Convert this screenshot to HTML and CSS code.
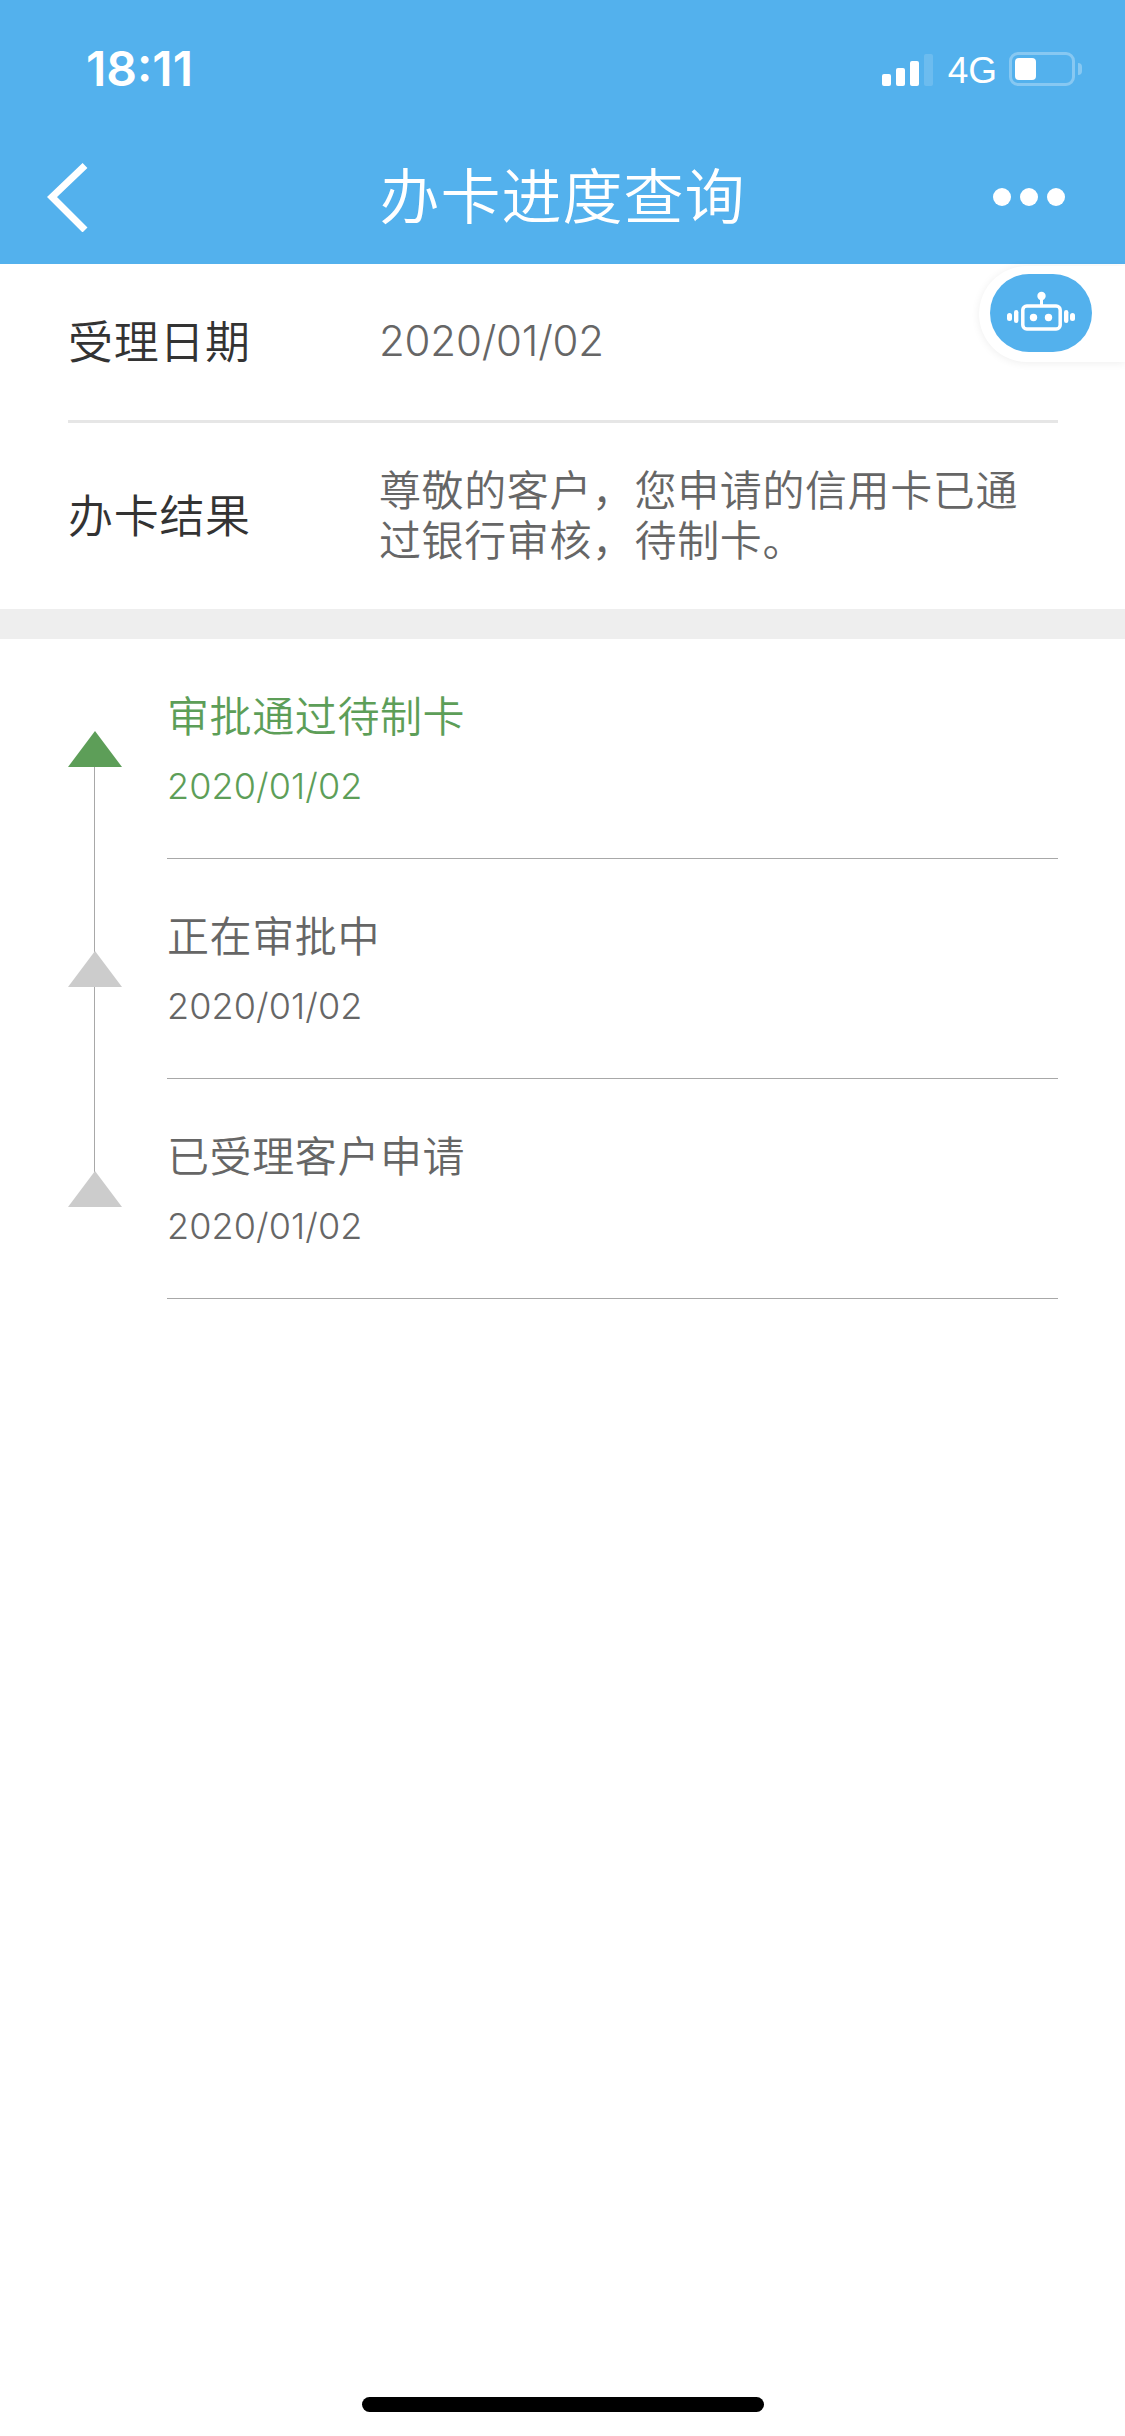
FILE: index.html
```html
<!DOCTYPE html>
<html lang="zh">
<head>
    <meta charset="UTF-8">
    <meta name="viewport" content="width=device-width, initial-scale=1.0">
    <title>办卡进度查询</title>
    <link rel="stylesheet" href="styles.css">
</head>
<body>
    <div class="page">
        <header class="header">
            <div class="status-bar">
                <span class="time">18:11</span>
                <div class="status-right">
                    <div class="signal">
                        <i class="bar bar-1"></i>
                        <i class="bar bar-2"></i>
                        <i class="bar bar-3"></i>
                        <i class="bar bar-4"></i>
                    </div>
                    <span class="network">4G</span>
                    <div class="battery"><i class="battery-level"></i></div>
                    <i class="battery-nub"></i>
                </div>
            </div>
            <div class="nav-bar">
                <svg class="back-icon" width="42" height="70" viewBox="0 0 42 70">
                    <path d="M38 3.500 L5 35 L38 68" fill="none" stroke="#fff" stroke-width="7"/>
                </svg>
                <h1 class="nav-title">办卡进度查询</h1>
                <div class="more">
                    <i class="dot"></i>
                    <i class="dot"></i>
                    <i class="dot"></i>
                </div>
            </div>
        </header>

        <div class="robot-tab">
            <div class="robot-btn">
                <svg width="70" height="44" viewBox="0 0 70 44" fill="none">
                    <circle cx="35.500" cy="5" r="4.200" fill="#fff"/>
                    <path d="M35.500 8 V15" stroke="#fff" stroke-width="3"/>
                    <rect x="16.800" y="15" width="37.400" height="23" rx="4" stroke="#fff" stroke-width="3.500"/>
                    <circle cx="27.500" cy="26.500" r="3.700" fill="#fff"/>
                    <circle cx="42.500" cy="26.500" r="3.700" fill="#fff"/>
                    <rect x="8" y="19" width="4.400" height="13" rx="2.200" fill="#fff"/>
                    <rect x="1" y="22" width="5" height="8" rx="2.500" fill="#fff"/>
                    <rect x="58" y="19" width="4.400" height="13" rx="2.200" fill="#fff"/>
                    <rect x="64" y="22" width="5" height="8" rx="2.500" fill="#fff"/>
                </svg>
            </div>
        </div>

        <section class="summary">
            <div class="summary-row row-date">
                <div class="summary-label">受理日期</div>
                <div class="summary-value date-value">2020/01/02</div>
            </div>
            <div class="summary-row row-result">
                <div class="summary-label">办卡结果</div>
                <div class="summary-value">尊敬的客户，您申请的信用卡已通过银行审核，待制卡。</div>
            </div>
        </section>

        <div class="divider"></div>

        <ul class="timeline">
            <li class="step step-active">
                <div class="step-mark"><i class="triangle"></i></div>
                <div class="step-body">
                    <div class="step-title">审批通过待制卡</div>
                    <div class="step-date">2020/01/02</div>
                </div>
            </li>
            <li class="step">
                <div class="step-mark"><i class="triangle"></i></div>
                <div class="step-body">
                    <div class="step-title">正在审批中</div>
                    <div class="step-date">2020/01/02</div>
                </div>
            </li>
            <li class="step">
                <div class="step-mark"><i class="triangle"></i></div>
                <div class="step-body">
                    <div class="step-title">已受理客户申请</div>
                    <div class="step-date">2020/01/02</div>
                </div>
            </li>
        </ul>

        <div class="home-area"><div class="home-indicator"></div></div>
    </div>
</body>
</html>
```

FILE: styles.css
```css
* {
    box-sizing: border-box;
}

body {
    margin: 0;
    background: #fff;
    font-family: "Inter", "Noto Sans CJK SC", sans-serif;
}

.page {
    position: relative;
    display: flex;
    flex-direction: column;
    width: 1125px;
    height: 2436px;
    overflow: hidden;
}

/* header */
.header {
    height: 264px;
    background: #53b1ed;
    color: #fff;
}

.status-bar {
    display: flex;
    justify-content: space-between;
    align-items: flex-end;
    height: 86px;
    padding: 0 43px 0 86px;
}

.time {
    font-size: 48px;
    font-weight: 600;
    line-height: 46px;
    margin-bottom: -6px;
}

.status-right {
    display: flex;
    align-items: flex-end;
}

.signal {
    display: flex;
    align-items: flex-end;
    gap: 5px;
    height: 33px;
    margin-right: 15px;
}

.bar {
    width: 9px;
    background: #fff;
    border-radius: 2px;
}

.bar-1 { height: 12px; }
.bar-2 { height: 18px; }
.bar-3 { height: 25px; }
.bar-4 { height: 32px; background: rgba(255, 255, 255, 0.15); }

.network {
    font-family: "Liberation Sans", sans-serif;
    font-size: 37px;
    line-height: 36px;
    margin-right: 12px;
    margin-bottom: -3px;
}

.battery {
    width: 66px;
    height: 34px;
    padding: 6px;
    border: 3px solid rgba(255, 255, 255, 0.3);
    border-radius: 9px;
}

.battery-level {
    display: block;
    width: 21px;
    height: 22px;
    margin: -3px 0 0 -3px;
    background: #fff;
    border-radius: 4px;
}

.battery-nub {
    width: 4px;
    height: 12px;
    margin: 0 0 11px 3px;
    background: rgba(255, 255, 255, 0.3);
    border-radius: 0 4px 4px 0;
}

.nav-bar {
    display: grid;
    grid-template-columns: 1fr auto 1fr;
    align-items: center;
    height: 178px;
    padding: 44px 60px 0;
}

.back-icon {
    display: block;
    margin-left: -13px;
}

.nav-title {
    margin: 0;
    font-size: 60px;
    font-weight: 350;
    line-height: 70px;
    letter-spacing: 1px;
}

.more {
    display: flex;
    justify-content: flex-end;
    gap: 9px;
}

.dot {
    width: 18px;
    height: 18px;
    background: #fff;
    border-radius: 50%;
}

/* robot button */
.robot-tab {
    position: absolute;
    top: 266px;
    right: 0;
    width: 146px;
    height: 96px;
    padding: 8px 0 0 11px;
    background: #fff;
    border-radius: 48px 0 0 48px;
    box-shadow: 0 1px 8px rgba(0, 0, 0, 0.07);
}

.robot-btn {
    display: flex;
    align-items: center;
    justify-content: center;
    width: 102px;
    height: 78px;
    background: #53b1ed;
    border-radius: 39px;
}

.robot-btn svg {
    display: block;
}

/* summary */
.summary {
    padding: 0 67px 0 68px;
}

.summary-row {
    display: flex;
    align-items: center;
}

.row-date {
    height: 159px;
    border-bottom: 3px solid #e6e6e6;
}

.row-result {
    height: 186px;
}

.summary-label {
    flex: none;
    width: 311px;
    padding-bottom: 5px;
    font-size: 45px;
    font-weight: 350;
    letter-spacing: 0.7px;
    color: #333;
}

.summary-value {
    font-size: 42px;
    font-weight: 350;
    line-height: 50px;
    color: #666;
    letter-spacing: 0.6px;
}

.date-value {
    padding-bottom: 2px;
    letter-spacing: -0.2px;
}

.divider {
    height: 30px;
    background: #eee;
}

/* timeline */
.timeline {
    list-style: none;
    margin: 0;
    padding: 0 67px 0 68px;
}

.step {
    display: flex;
    height: 220px;
}

.step-mark {
    position: relative;
    flex: none;
    width: 99px;
    padding-top: 92px;
}

.triangle {
    display: block;
    width: 0;
    height: 0;
    border-left: 27px solid transparent;
    border-right: 27px solid transparent;
    border-bottom: 36px solid #ccc;
}

.step-active .triangle {
    border-bottom-color: #5d9e58;
}

.step:not(:last-child) .step-mark::after {
    content: "";
    position: absolute;
    top: 128px;
    left: 26px;
    width: 1px;
    height: 185px;
    background: #a8a8a8;
}

.step-body {
    flex: 1;
    padding-top: 52px;
    border-bottom: 1px solid #a8a8a8;
    color: #666;
}

.step-active .step-body {
    color: #5d9e58;
}

.step-title {
    font-size: 42px;
    font-weight: 350;
    line-height: 52px;
    letter-spacing: 0.6px;
}

.step-date {
    margin-top: 17px;
    font-size: 36px;
    font-weight: 350;
    line-height: 52px;
    letter-spacing: 0.1px;
}

/* home indicator */
.home-area {
    display: flex;
    justify-content: center;
    align-items: flex-end;
    flex: 1;
    padding-bottom: 24px;
}

.home-indicator {
    width: 402px;
    height: 15px;
    background: #000;
    border-radius: 8px;
}
```
